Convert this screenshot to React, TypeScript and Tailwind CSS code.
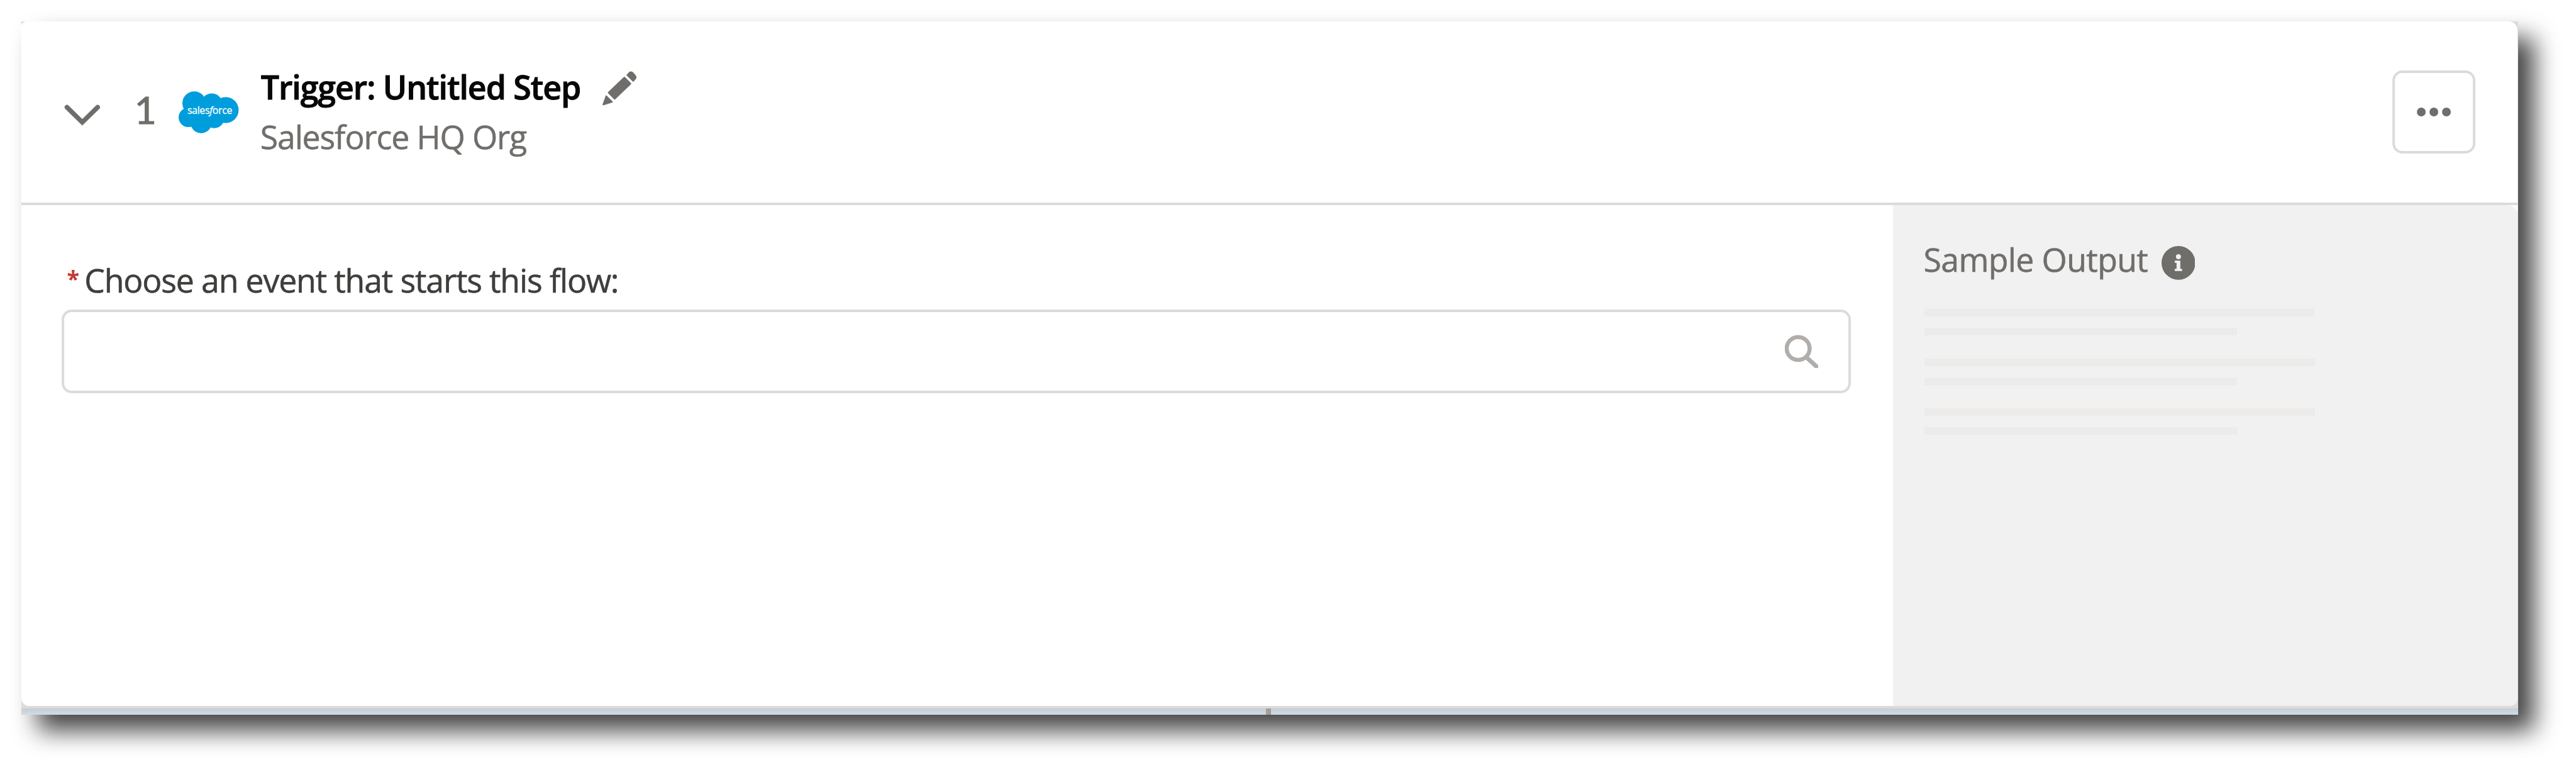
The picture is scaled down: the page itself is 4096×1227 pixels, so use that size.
function Chevron() {
  return (
    <svg className="mt-[10px] h-[34px] w-[58px] shrink-0" viewBox="0 0 58 34" fill="none" stroke="#706e6b" strokeWidth="7.5" strokeLinecap="round" strokeLinejoin="miter">
      <path d="M4.5 4.500L29 28.500L53.500 4.500" />
    </svg>
  );
}

function Cloud() {
  return (
    <svg className="mt-[1px] h-[68px] w-[96px] shrink-0" viewBox="0 0 96 68">
      <g fill="#009ddc">
        <circle cx="25" cy="19.200" r="19" />
        <circle cx="53" cy="20.500" r="17" />
        <circle cx="75.200" cy="30" r="20.800" />
        <circle cx="57" cy="43" r="16" />
        <circle cx="36" cy="50" r="17" />
        <circle cx="15.500" cy="41.800" r="15.500" />
        <rect x="16" y="18" width="56" height="32" />
      </g>
      <text x="14" y="36.500" fill="#fff" stroke="#fff" strokeWidth="0.3" fontSize="16" textLength="72" fontFamily="Open Sans, sans-serif">
        sales<tspan fontStyle="italic">f</tspan>orce
      </text>
    </svg>
  );
}

function Pencil() {
  return (
    <svg className="mt-[3px] h-[55px] w-[55px] shrink-0" viewBox="0 0 55 55" fill="#706e6b">
      <path d="M39 5.500L42 2Q45.500 -1 49 2L52.500 6Q56 9.500 53 13L50 16.500Q49 17.300 48 16.300L38.700 7Q38 6.200 39 5.500Z" />
      <path d="M34 9.500Q35 8.500 36 9.500L45.500 19Q46.500 20 45.500 21L20.500 45Q19.500 46 18.500 45L9 35.500Q8 34.500 9 33.500Z" />
      <path d="M5 39.500Q5.600 38.200 6.800 39.200L16.200 48.500Q17 49.600 15.600 50.200L2 54.500Q-.3 55 .2 52.800Z" />
    </svg>
  );
}

function Search() {
  return (
    <svg className="h-[54px] w-[54px] shrink-0" viewBox="0 0 54 54" fill="none" stroke="#b0adab">
      <circle cx="21.300" cy="22" r="18.300" strokeWidth="6.500" />
      <path d="M36 37.500L50.300 50.500" strokeWidth="7" strokeLinecap="round" />
    </svg>
  );
}

function Info() {
  return (
    <svg className="mt-[10px] h-[54px] w-[54px] shrink-0" viewBox="0 0 54 54">
      <circle cx="27" cy="27" r="27" fill="#706e6b" />
      <circle cx="27" cy="17" r="4" fill="#f1f1f1" />
      <path d="M22 23.500H30V36.500H32Q33 36.500 33 37.500V39Q33 40 32 40H22Q21 40 21 39V37.500Q21 36.500 22 36.500H24V27H22Q21 27 21 26V24.500Q21 23.500 22 23.500Z" fill="#f1f1f1" />
    </svg>
  );
}

export default function App() {
  return (
    <div className="h-[1233px] w-[4118px] overflow-hidden bg-white px-[34px] pt-[34px] font-['Open_Sans',sans-serif] [zoom:0.994658]">
      <div className="h-[1108px] w-[3992px] bg-[#dddbda] pr-[2px] shadow-[26px_26px_37px_rgba(0,0,0,0.74)]">
        <div className="flex h-[1094px] flex-col rounded-tl-[8px] rounded-tr-[14px] rounded-b-[12px] bg-white">
          <header className="flex h-[294px] items-center border-b-[4.1px] border-[#dddbda] pr-[67px] pl-[69px]">
            <Chevron />
            <span className="mb-[7px] ml-[54px] w-[71px] font-['Lato',sans-serif] text-[61px] leading-none text-[#706e6b] [-webkit-text-stroke:1px_#706e6b]">1</span>
            <Cloud />
            <div className="ml-[33px] flex-1 text-[52px] leading-[79px] whitespace-nowrap">
              <div className="flex items-center">
                <h1 className="w-[548px] pl-[2px] font-semibold tracking-[-1px] text-[#080707] [-webkit-text-stroke:1px_#080707]">Trigger: Untitled Step</h1>
                <Pencil />
              </div>
              <p className="pl-[1px] tracking-[-1.1px] text-[#706e6b] [-webkit-text-stroke:0.6px_#706e6b]">Salesforce HQ Org</p>
            </div>
            <button className="flex h-[133px] w-[133px] items-center justify-center gap-[6px] rounded-[16px] border-[4.1px] border-[#dddbda]">
              <i className="size-[14px] rounded-full bg-[#706e6b]" />
              <i className="size-[14px] rounded-full bg-[#706e6b]" />
              <i className="size-[14px] rounded-full bg-[#706e6b]" />
            </button>
          </header>
          <div className="flex flex-1">
            <main className="w-[2992px] pt-[81px] pl-[65px]">
              <label className="flex h-[86px] pl-[8px] text-[52px] leading-[78px] whitespace-nowrap text-[#3e3e3c]">
                <span className="w-[28px] text-[36px] leading-[72px] font-bold text-[#c23934]">*</span>
                <span className="tracking-[-1.13px] [-webkit-text-stroke:0.6px_#3e3e3c]">Choose an event that starts this flow:</span>
              </label>
              <div className="flex h-[133px] w-[2860px] items-center justify-end rounded-[16px] border-[4.1px] border-[#dddbda] pr-[48px]">
                <Search />
              </div>
            </main>
            <aside className="flex-1 rounded-tr-[16px] rounded-br-[12px] bg-[#f1f1f1] pt-[48px] pl-[50px]">
              <h2 className="flex h-[78px] items-center gap-[23px] text-[52px] leading-[78px] whitespace-nowrap text-[#706e6b]">
                <span className="-ml-[1px] w-[357px] tracking-[-0.6px] [-webkit-text-stroke:0.6px_#706e6b]">Sample Output</span>
                <Info />
              </h2>
              <div className="mt-[40px] flex flex-col gap-[38px]">
                {[0, 1, 2].map((n) => (
                  <div key={n} className="flex flex-col gap-[17.5px]">
                    <div className="h-[12px] w-[625px] bg-[#ecebea]" />
                    <div className="h-[12px] w-[500px] bg-[#ecebea]" />
                  </div>
                ))}
              </div>
            </aside>
          </div>
        </div>
        <div className="h-[4px] bg-[#dddbda]" />
        <div className="-mr-[2px] h-[10px] bg-linear-to-b from-[#c5ced6] to-[#d2dae5] pl-[1990px]">
          <div className="h-full w-[8px] bg-[#a39e9b]" />
        </div>
      </div>
    </div>
  );
}
